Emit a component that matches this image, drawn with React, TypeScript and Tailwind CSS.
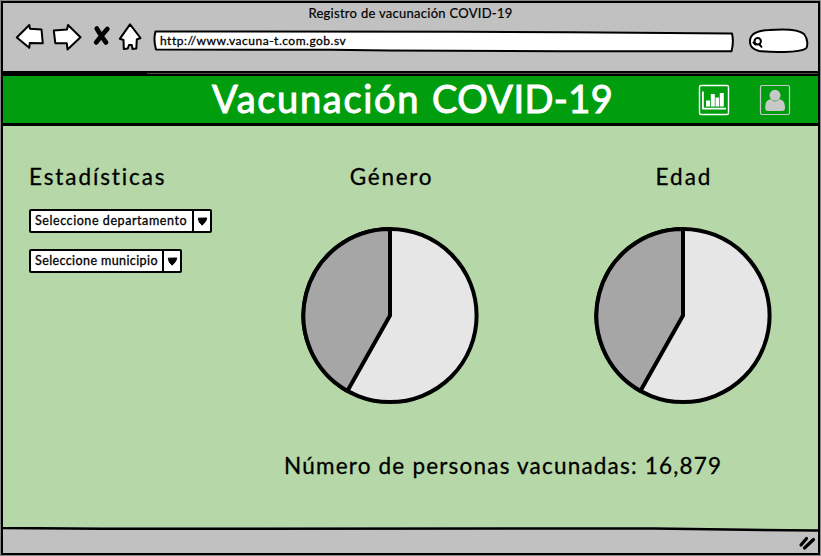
import React from "react";

function NavIcons() {
  return (
    <svg
      className="h-8 w-[130px] shrink-0"
      viewBox="14 20 130 32"
      fill="white"
      stroke="black"
      strokeWidth="2"
      strokeLinejoin="round"
      strokeLinecap="round"
    >
      <path d="M16.8 37.5 L29.3 25 L30 28.8 L41.5 29.5 L42.8 43.3 L29.8 43 L29.2 47.8 Z" />
      <path d="M53.8 30.5 L67 29.5 L68 25 L80.5 37.3 L67.5 49.5 L66.8 43.3 L55.3 43.2 Z" />
      <path d="M96.8 28.6 Q101 36 106 42.4 M107.3 29 Q101 36 96.2 42.4" fill="none" strokeWidth="4.8" />
      <path d="M130 24.3 L140.5 38 L136.8 39.5 L136.3 48.5 L132.5 49 L131.8 45 L129 45 L127.8 48.5 L123.8 49 L123.5 40 L119.8 38.8 Z" />
    </svg>
  );
}

function AddressBar({ url }: { url: string }) {
  return (
    <div className="relative mt-[11px] ml-[9px] flex h-[23px] w-[582px] shrink-0 items-center">
      <svg className="absolute inset-0 h-full w-full" viewBox="153 30 582 23">
        <path
          d="M155.5 31.5 L460 31.8 L570 32.3 L732 33.5 Q734 42 731.5 51.3 L560 51.3 L390 50.5 L330 49.8 L156 49.5 Q153.2 40 155.5 31.5 Z"
          fill="white"
          stroke="black"
          strokeWidth="2"
          strokeLinejoin="round"
        />
      </svg>
      <span className="relative -top-px pl-[7px] text-[12px] leading-none tracking-[0.5px] whitespace-nowrap [-webkit-text-stroke:0.3px_black]">
        {url}
      </span>
    </div>
  );
}

function SearchField() {
  return (
    <svg className="mt-[10px] ml-3 h-7 w-[62px] shrink-0" viewBox="747 27 62 28" fill="white" stroke="black" strokeWidth="2">
      <path d="M750 41 C750 34 756 30.5 769 30 C785 28.7 799 29.5 804 34 C808 39 808 46 806 48.5 C799 53 771 52.5 759 51 C753 49.5 749.5 46 750 41 Z" />
      <circle cx="757.7" cy="41.2" r="3.2" fill="none" />
      <path d="M759.5 44.5 L761.5 46.8 M753.5 42.5 L755.5 44.5" fill="none" strokeLinecap="round" />
    </svg>
  );
}

function ChartButton() {
  return (
    <svg className="h-8 w-8" viewBox="698 84 32 32" fill="white">
      <rect x="699.5" y="85.5" width="29" height="29" rx="1.5" fill="none" stroke="white" strokeWidth="1.4" />
      <path d="M702 91.5h1.8v16.2h22.2v1.8h-24z" />
      <path d="M706 100.5h4v6h-4zM710.8 94h4v12.5h-4zM715.5 97.5h3.6v9h-3.6zM719.8 93h4v13.5h-4z" />
    </svg>
  );
}

function UserButton() {
  return (
    <svg className="h-8 w-8" viewBox="759 84 32 32" fill="#c8c8c8">
      <rect x="760.5" y="85.5" width="29" height="29" rx="1.5" fill="none" stroke="#c8c8c8" strokeWidth="1.2" />
      <circle cx="775" cy="95.3" r="5.5" />
      <path d="M770.5 99.3 Q775 103.5 779.5 99.3 C783.5 100 785 103 785 108 Q785 111 782 111 H768 Q765.2 111 765.2 108 C765.2 103 766.5 100 770.5 99.3 Z" />
    </svg>
  );
}

function Select({ label, className, textClass }: { label: string; className: string; textClass: string }) {
  return (
    <div className={`flex h-6 items-stretch rounded-[2px] border-2 border-black bg-white ${className}`}>
      <span
        className={`flex flex-1 items-center pl-1 text-[12.5px] leading-none whitespace-nowrap [-webkit-text-stroke:0.3px_black] ${textClass}`}
      >
        {label}
      </span>
      <span className="flex w-[18px] items-center justify-center border-l-2 border-black">
        <svg className="h-[9px] w-[11px]" viewBox="0 0 11 9">
          <path d="M1.2 1.2 L9.8 1 L8.6 4.4 L5.2 8.2 L2.4 5.2 Z" stroke="black" strokeLinejoin="round" />
        </svg>
      </span>
    </div>
  );
}

function Pie() {
  return (
    <svg className="h-[180px] w-[180px]" viewBox="-90 -90.5 180 180" stroke="black" strokeWidth="4" strokeLinejoin="round">
      <circle r="86.6" fill="#e6e6e6" />
      <path d="M0 0 L-42.6 75.4 A86.6 86.6 0 0 1 0 -86.6 Z" fill="#a6a6a6" />
    </svg>
  );
}

function Chart({ title, className }: { title: string; className: string }) {
  return (
    <div className="flex w-[180px] flex-col items-center">
      <h2 className={`h-[30px] text-[22.5px] leading-[29px] [-webkit-text-stroke:0.3px_black] ${className}`}>{title}</h2>
      <div className="mt-[33px]">
        <Pie />
      </div>
    </div>
  );
}

export default function App() {
  return (
    <div className="h-[556px] w-[821px] overflow-hidden bg-[#888] p-px font-['Lato','Open_Sans',sans-serif] text-black">
      <div className="flex h-[554px] w-[819px] flex-col border-2 border-black bg-[#c1c1c1]">
        <header className="flex h-[68px] shrink-0 flex-col">
          <div className="h-[17px] text-center text-[13px] leading-[20px] tracking-[0.28px] [-webkit-text-stroke:0.2px_black]">
            Registro de vacunación COVID-19
          </div>
          <div className="flex h-8 items-center pl-[11px]">
            <NavIcons />
            <AddressBar url="http://www.vacuna-t.com.gob.sv" />
            <SearchField />
          </div>
        </header>
        <div className="h-[5px] shrink-0 bg-black pt-[2px]">
          <div className="ml-[144px] h-px bg-[#4a4a4a]" />
        </div>
        <div className="flex h-[50px] shrink-0 items-center border-b-[3px] border-black bg-[#009e0f]">
          <h1 className="relative -top-[2px] flex w-[695px] pl-[209px] text-[38px] leading-none whitespace-pre text-white [-webkit-text-stroke:1px_white]">
            <span className="w-[220px] tracking-[1.7px]">Vacunación </span>
            <span className="tracking-[0.4px]">COVID-19</span>
          </h1>
          <div className="flex gap-[29px]">
            <ChartButton />
            <UserButton />
          </div>
        </div>
        <main className="flex h-[401px] shrink-0 bg-[#b6d7a8]">
          <aside className="w-[297px] pt-[36px] pl-[26px]">
            <h2 className="h-[30px] text-[22.5px] leading-[29px] tracking-[1.9px] [-webkit-text-stroke:0.3px_black]">
              Estadísticas
            </h2>
            <Select label="Seleccione departamento" className="mt-[17px] w-[183px]" textClass="tracking-[0.57px]" />
            <Select label="Seleccione municipio" className="mt-4 w-[153px]" textClass="tracking-[0.4px]" />
          </aside>
          <section className="pt-[36px]">
            <div className="flex gap-[113px]">
              <Chart title="Género" className="pl-[3px] tracking-[1.7px]" />
              <Chart title="Edad" className="pl-[2px] tracking-[2px]" />
            </div>
            <p className="mt-[46px] -ml-[16px] text-[22.5px] leading-[29px] tracking-[1.2px] whitespace-nowrap [-webkit-text-stroke:0.3px_black]">
              Número de personas vacunadas: 16,879
            </p>
          </section>
        </main>
        <footer className="relative flex min-h-0 flex-1 items-end justify-end">
          <svg className="absolute top-0 left-0 h-[5px] w-[815px]" viewBox="0 0 815 5">
            <path d="M0 0 H650 L815 3 V0 Z" fill="#b6d7a8" />
            <path d="M0 1 L100 1.7 L650 1.5 L815 3.6" fill="none" stroke="black" strokeWidth="2.5" />
          </svg>
          <svg className="mr-[2px] mb-[2px] h-4 w-[18px]" viewBox="798 535 18 16" stroke="black" strokeWidth="3.2" strokeLinecap="round">
            <path d="M801 545 L806.5 538.5 M804.5 548 L813.5 539.5" />
          </svg>
        </footer>
      </div>
    </div>
  );
}
